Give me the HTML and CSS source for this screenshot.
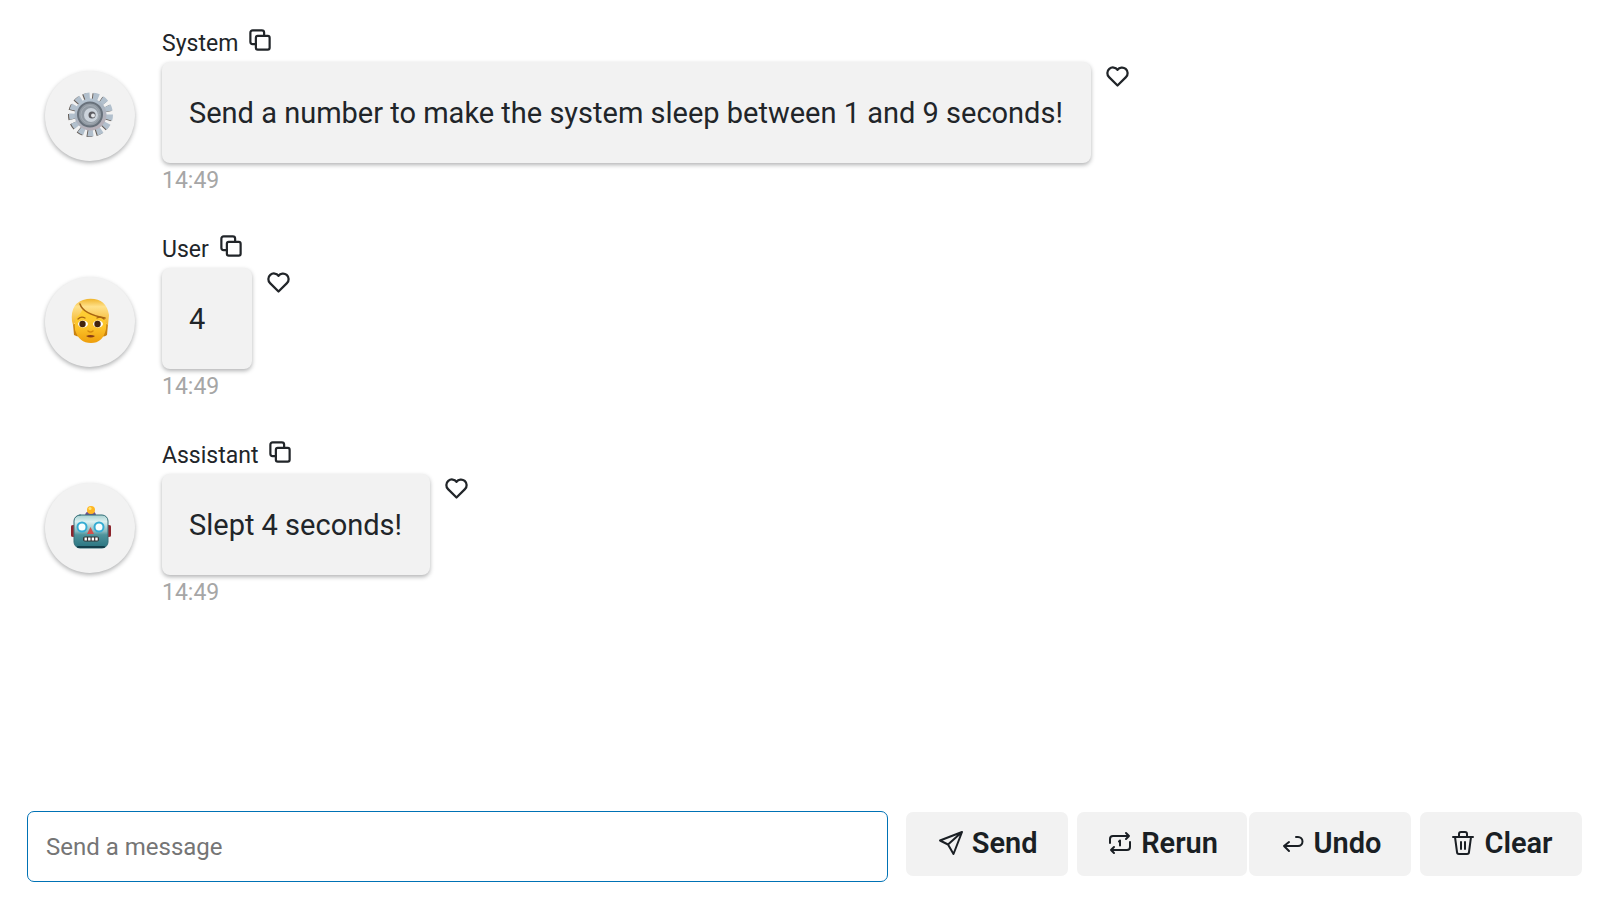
FILE: index.html
```html
<!DOCTYPE html>
<html lang="en">
<head>
<meta charset="utf-8">
<title>Chat</title>
<link rel="stylesheet" href="styles.css">
</head>
<body>
<svg class="defs" aria-hidden="true">
  <symbol id="copy" viewBox="0 0 24 24"><rect x="7.500" y="7.500" width="15" height="15" rx="2"/><path d="M7.500 16.500H4a2.500 2.500 0 0 1-2.500-2.500V4A2.500 2.500 0 0 1 4 1.500h10A2.500 2.500 0 0 1 16.500 4v3.500"/></symbol>
  <symbol id="heart" viewBox="0 0 24 24"><path d="M19.5 12.572l-7.5 7.428l-7.5-7.428a5 5 0 1 1 7.5-6.566a5 5 0 1 1 7.5 6.572"/></symbol>
</svg>
<main class="chat">
  <section class="feed">
    <article class="message">
      <div class="avatar">
        <svg class="face" viewBox="0 0 60 60">
          <defs>
            <linearGradient id="steel" x1="0" y1="0" x2="0.4" y2="1"><stop offset="0" stop-color="#bccbd8"/><stop offset="0.5" stop-color="#a9b5c2"/><stop offset="1" stop-color="#b7b0b8"/></linearGradient>
          </defs>
          <g class="teeth-shade"><circle cx="30" cy="31" r="18" pathLength="130"/></g>
          <g class="teeth"><circle cx="31" cy="30.500" r="18" pathLength="130"/></g>
          <circle cx="30.500" cy="30.500" r="16" fill="url(#steel)"/>
          <circle cx="30" cy="30.500" r="12" fill="#929ba4" stroke="#68717b" stroke-width="2"/>
          <circle cx="30" cy="30.500" r="9" fill="none" stroke="#a5adb5" stroke-width="1"/>
          <circle cx="31" cy="31" r="7" fill="#ccd4dc"/>
          <circle cx="32" cy="31" r="3.500" fill="#5b5b60"/>
          <circle cx="33" cy="31.500" r="2" fill="#e5e7ea"/>
        </svg>
      </div>
      <div class="body">
        <header class="name"><span>System</span><button class="icon-button" aria-label="Copy"><svg class="copy"><use href="#copy"/></svg></button></header>
        <div class="line"><p class="bubble">Send a number to make the system sleep between 1 and 9 seconds!</p><button class="icon-button" aria-label="Like"><svg class="heart"><use href="#heart"/></svg></button></div>
        <time class="time">14:49</time>
      </div>
    </article>
    <article class="message">
      <div class="avatar">
        <svg class="face" viewBox="0 0 60 60">
          <defs>
            <linearGradient id="skin" x1="0" y1="0" x2="0" y2="1"><stop offset="0" stop-color="#ffd43a"/><stop offset="0.6" stop-color="#fdc42a"/><stop offset="1" stop-color="#ee9e0c"/></linearGradient>
            <linearGradient id="hair" x1="0" y1="0" x2="0" y2="1"><stop offset="0" stop-color="#f0b52c"/><stop offset="0.3" stop-color="#ffe18a"/><stop offset="1" stop-color="#f3b32a"/></linearGradient>
          </defs>
          <path d="M13 34L14 45Q20 48 24 45L38 45Q43 48 47 45L48 34Z" fill="#c98210"/>
          <path d="M14 23Q14 13 30.500 13Q47 13 47 25L46 39Q43 53 31 53Q19 53 15 40Z" fill="url(#skin)"/>
          <path d="M12 31Q10 12 27 9Q46 7 49 25L48 35Q46 35 45 29Q34 27 23 19Q20 25 16 28Q15 34 13 35Z" fill="url(#hair)"/>
          <path d="M20 14Q23 24 45 28" fill="none" stroke="#a86512" stroke-width="1.500"/>
          <path d="M18 29Q21 26 25 28M37 28Q41 26 44 29" fill="none" stroke="#a86512" stroke-width="1.300"/>
          <ellipse cx="23" cy="34" rx="5" ry="3.500" fill="#fff"/><ellipse cx="38" cy="34" rx="5" ry="3.500" fill="#fff"/>
          <circle cx="22.500" cy="34" r="3.200" fill="#43240d"/><circle cx="37.500" cy="34" r="3.200" fill="#43240d"/>
          <path d="M28 41Q30.500 43 33 41" fill="none" stroke="#d58b0f" stroke-width="1.500"/>
          <path d="M26 46Q30.500 44 35 46Q31 49 26 46Z" fill="#873c16"/>
        </svg>
      </div>
      <div class="body">
        <header class="name"><span>User</span><button class="icon-button" aria-label="Copy"><svg class="copy"><use href="#copy"/></svg></button></header>
        <div class="line"><p class="bubble">4</p><button class="icon-button" aria-label="Like"><svg class="heart"><use href="#heart"/></svg></button></div>
        <time class="time">14:49</time>
      </div>
    </article>
    <article class="message">
      <div class="avatar">
        <svg class="face" viewBox="0 0 60 60">
          <defs>
            <linearGradient id="metal" x1="0" y1="0" x2="0" y2="1"><stop offset="0" stop-color="#a5cfcf"/><stop offset="0.2" stop-color="#dcf1f1"/><stop offset="0.5" stop-color="#86b7bc"/><stop offset="0.6" stop-color="#4e949c"/><stop offset="1" stop-color="#28737f"/></linearGradient>
          </defs>
          <rect x="11" y="29" width="40" height="12" rx="2" fill="#b12b30"/>
          <path d="M12 30V40M50 30V40" stroke="#681f28" stroke-width="1"/>
          <path d="M25 20Q25 15 31 15Q36 15 36 20Z" fill="#6c5290"/>
          <circle cx="31" cy="14" r="4" fill="#ffb622"/><circle cx="30" cy="12.500" r="1.500" fill="#ffe779"/>
          <rect x="14" y="19" width="34" height="33" rx="6" fill="url(#metal)" stroke="#356f79" stroke-width="1"/>
          <path d="M18 51H44" stroke="#133f4b" stroke-width="2"/>
          <circle cx="22" cy="31" r="4.500" fill="#f8ffff" stroke="#35acd3" stroke-width="2"/><circle cx="39" cy="31" r="4.500" fill="#f8ffff" stroke="#35acd3" stroke-width="2"/>
          <path d="M30.500 31L34 38H27Z" fill="#d44f4a"/>
          <rect x="23" y="40.500" width="16" height="5" rx="2" fill="#333"/><path d="M24.500 43H38" stroke="#fff" stroke-width="3" stroke-linecap="butt" stroke-dasharray="2.400 1.200"/>
        </svg>
      </div>
      <div class="body">
        <header class="name"><span>Assistant</span><button class="icon-button" aria-label="Copy"><svg class="copy"><use href="#copy"/></svg></button></header>
        <div class="line"><p class="bubble">Slept 4 seconds!</p><button class="icon-button" aria-label="Like"><svg class="heart"><use href="#heart"/></svg></button></div>
        <time class="time">14:49</time>
      </div>
    </article>
  </section>
  <form class="composer">
    <input class="entry" type="text" aria-label="Send a message" placeholder="Send a message">
    <div class="actions">
      <button class="action" type="button"><svg viewBox="0 0 24 24"><path d="M23 1L1 9.500L9 13.500ZM23 1L9 13.500L14.500 23Z"/></svg>Send</button>
      <div class="pair">
        <button class="action" type="button"><svg viewBox="0 0 24 24"><path d="M2 12V8a3 3 0 0 1 3-3h16M18 2l3 3l-3 3M22 11v5a3 3 0 0 1-3 3H3M6 16l-3 3l3 3M11 10.500l1-1v5"/></svg>Rerun</button>
        <button class="action" type="button"><svg viewBox="0 0 24 24"><path d="M8 11l-5 4l5 5M3 15h14a4.500 4.500 0 0 0 0-9h-2"/></svg>Undo</button>
      </div>
      <button class="action" type="button"><svg viewBox="0 0 24 24"><path d="M2 6h20M4 6l2 15a2 2 0 0 0 2 2h8a2 2 0 0 0 2-2l2-15M8 6V3a2 2 0 0 1 2-2h4a2 2 0 0 1 2 2v3M10 11v7M14 11v7"/></svg>Clear</button>
    </div>
  </form>
</main>
</body>
</html>
```
FILE: styles.css
```css
* { box-sizing: border-box; }
body { margin: 0; background: #fff; color: #212529; font-family: Roboto, sans-serif; }
button, input { font: inherit; color: inherit; }
svg { flex: none; fill: none; stroke: currentColor; stroke-width: 2; stroke-linecap: round; stroke-linejoin: round; }
.defs { display: none; }
.chat { min-height: 100vh; display: flex; flex-direction: column; justify-content: space-between; padding: 28px 18px 18px 27px; }
.feed { display: flex; flex-direction: column; gap: 35px; padding-left: 18px; }
.message { display: flex; align-items: flex-start; gap: 27px; }
.avatar { flex: none; display: grid; place-items: center; width: 90px; height: 90px; margin-top: 43px; padding-bottom: 4px; border-radius: 50%; background: #f2f2f2; box-shadow: 0 2px 4px rgba(33, 37, 41, 0.35); }
.face { width: 60px; height: 60px; stroke: none; }
.teeth circle, .teeth-shade circle { fill: none; stroke-width: 8; stroke-linecap: butt; stroke-dasharray: 6 4; }
.teeth circle { stroke: #b2c0cd; }
.teeth-shade circle { stroke: #675f59; }
.name { display: flex; align-items: flex-start; gap: 11px; height: 34px; font-size: 23px; line-height: 32px; }
.icon-button { display: flex; padding: 0; border: 0; background: none; }
.copy { width: 22px; height: 22px; margin-top: 1px; stroke-width: 2.4; }
.line { display: flex; align-items: flex-start; gap: 13px; }
.bubble { margin: 0; padding: 33px 28px 32px 27px; border-radius: 8px; background: #f2f2f2; box-shadow: 0 2px 4px rgba(33, 37, 41, 0.35); font-size: 29px; line-height: 36px; min-width: 90px; }
.heart { width: 27px; height: 27px; margin-top: 1px; }
.time { display: block; color: #a6a6a6; font-size: 23px; line-height: 36px; }
.composer { display: flex; align-items: flex-start; gap: 18px; }
.entry { flex: 1; min-width: 0; height: 71px; padding: 0 18px; border: 1px solid #0072b5; border-radius: 7px; background: #fff; font-size: 24px; outline: 0; }
.entry::placeholder { color: #757575; opacity: 1; }
.actions { display: flex; gap: 9px; padding-top: 1px; }
.pair { display: flex; gap: 2px; }
.action { display: flex; align-items: center; justify-content: center; gap: 9px; min-width: 162px; height: 64px; padding: 0 29px 2px 31px; border: 0; border-radius: 7px; background: #f2f2f2; color: #1a1f24; font-size: 29px; line-height: 32px; font-weight: 600; }
.action svg { width: 24px; height: 24px; overflow: visible; }
```
